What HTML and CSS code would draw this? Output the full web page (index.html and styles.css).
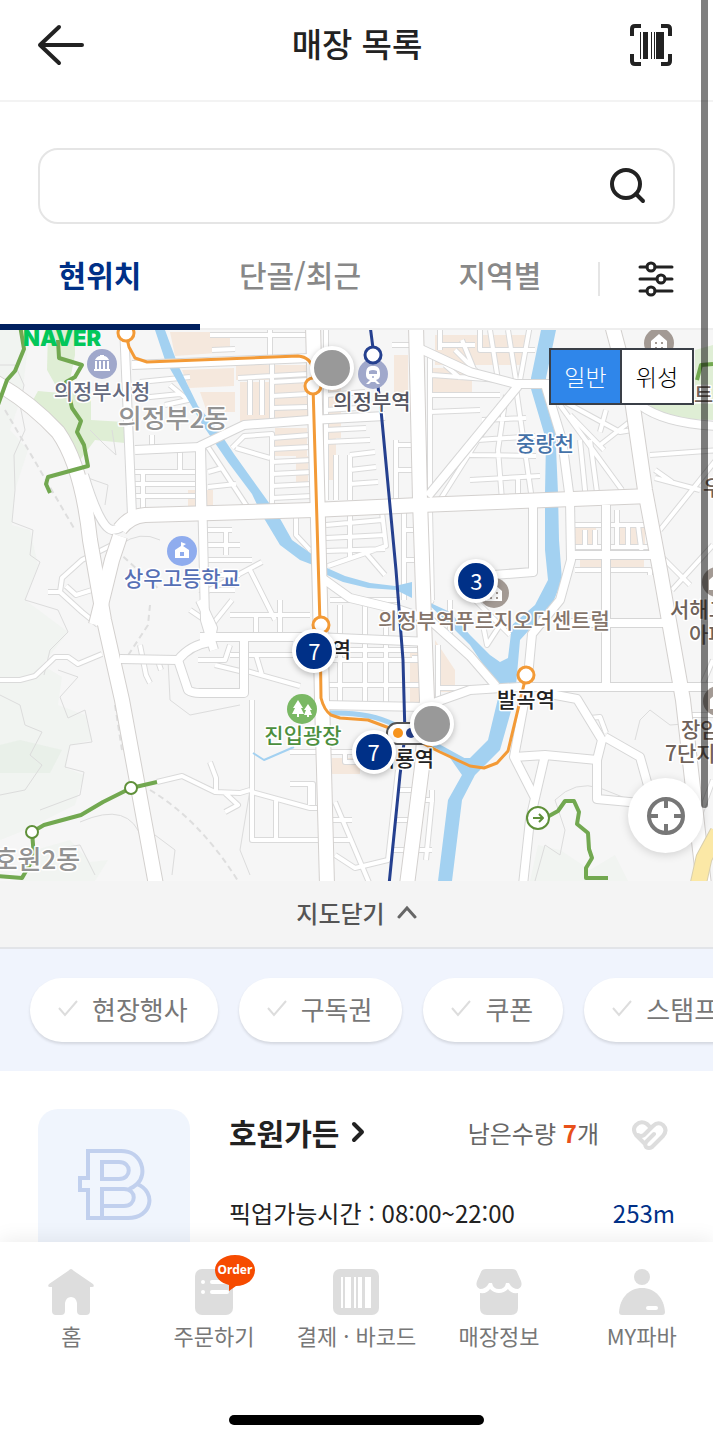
FILE: index.html
```html
<!DOCTYPE html>
<html lang="ko">
<head>
    <meta charset="UTF-8">
    <meta name="viewport" content="width=device-width, initial-scale=1.0">
    <title>매장 목록</title>
    <link rel="stylesheet" href="styles.css">
</head>
<body>
    <div class="app">
        <header class="header">
            <button class="icon-btn" aria-label="뒤로">
                <svg width="48" height="44" viewBox="0 0 48 44" class="line-icon"><path d="M22 4L3 22l19 18M3 22h42"/></svg>
            </button>
            <h1>매장 목록</h1>
            <button class="icon-btn" aria-label="바코드 스캔">
                <svg width="44" height="44" viewBox="0 0 44 44">
                    <path class="scan-frame" d="M3 13V6q0-3 3-3h6M32 3h6q3 0 3 3v7M41 31v7q0 3-3 3h-6M12 41H6q-3 0-3-3v-7"/>
                    <path fill="#222" d="M11 9h1v27h-1zM14 9h5v27h-5zM22 9h1v27h-1zM25 9h1v27h-1zM27 9h8v27h-8z"/>
                </svg>
            </button>
        </header>

        <main class="content">
            <form class="search">
                <input type="text" aria-label="매장 검색">
                <button type="button" class="icon-btn" aria-label="검색">
                    <svg width="38" height="38" viewBox="0 0 38 38" class="line-icon"><circle cx="17" cy="17" r="14"/><path d="M27 27l7 7"/></svg>
                </button>
            </form>

            <nav class="tabs">
                <button class="tab active">현위치</button>
                <button class="tab">단골/최근</button>
                <button class="tab">지역별</button>
                <button class="filter-btn" aria-label="필터">
                    <svg width="36" height="38" viewBox="0 0 36 38" class="filter-icon">
                        <path d="M2 7h7M17 7h17M2 19h17M27 19h7M2 31h7M17 31h17"/>
                        <circle cx="13" cy="7" r="4"/><circle cx="23" cy="19" r="4"/><circle cx="13" cy="31" r="4"/>
                    </svg>
                </button>
            </nav>

            <section class="map">
                <svg class="map-canvas" viewBox="0 330 713 551">
                    <defs>
                        <g id="major">
                            <path d="M-5 382Q30 402 58 432Q82 466 90 540L104 620L122 700L156 885"/>
                            <path d="M96 625L112 560L120 536"/>
                            <path d="M313 325L320 600L322 700L324 770L327 885"/>
                            <path d="M416 325L420 500L424 620L427 700L422 767L407 885"/>
                            <path d="M612 325L632 400L645 490L660 570L683 700L704 885"/>
                            <path d="M120 529Q130 516 145 515L313 510L420 505L650 496"/>
                        </g>
                        <g id="medium">
                            <path d="M84 475Q100 528 112 530Q122 530 130 518"/>
                            <path d="M124 325L132 515M132 365L310 358"/>
                            <path d="M200 510V446L244 425L310 420L385 416"/>
                            <path d="M201 446L205 620L214 650"/>
                            <path d="M135 450L200 447"/>
                            <path d="M412 345L470 372L516 384H632"/>
                            <path d="M518 386L428 496"/>
                            <path d="M533 500V572L480 576"/>
                            <path d="M545 384L562 440L570 500L571 560L560 600L532 634L527 687L514 757L535 798L530 820L523 885"/>
                            <path d="M571 555H662M606 505V687M560 623H675"/>
                            <path d="M425 706L470 690L520 687H720"/>
                            <path d="M322 705L425 707M200 637H315L430 642"/>
                            <path d="M322 578L350 598L400 610L430 620L470 656L496 686"/>
                            <path d="M550 694L577 699L602 740L597 760V799L640 803M605 737L640 757L652 800"/>
                            <path d="M514 757L545 755L597 760M545 755L535 798"/>
                            <path d="M120 659L178 660Q190 645 210 642L213 628L200 600"/>
                            <path d="M178 660L188 690Q192 693 200 693H244V640"/>
                            <path d="M720 426Q665 424 640 405"/>
                        </g>
                        <g id="minor">
                            <path d="M0 680L20 680L35 676L55 657L68 657L78 664L102 654"/>
                            <path d="M157 782L182 776L215 792L240 793L250 790M210 762L216 778V792M225 793L238 805L225 812"/>
                            <path d="M112 545L82 560L62 578L60 592L82 612L98 625M92 590L76 595L66 586M48 592H60"/>
                            <path d="M140 382L190 377M140 398L180 394M170 385L188 400L165 405M210 335H310M212 350L235 349"/>
                            <path d="M152 435V447M135 472H195M135 484H195M135 496H195M180 450V472M143 470V508M208 447L248 508M208 472L222 468M208 487L236 484"/>
                            <path d="M206 530H232M206 545H240M206 560H252M206 575H240M206 590H235M226 530V555M200 595L262 562M250 570L275 620"/>
                            <path d="M232 448L244 436L272 434V508M236 448L270 458M272 438L310 435M272 449L310 447M272 462L312 460M272 474L312 472M272 486L312 484M272 498L312 496M272 396L308 394M272 408L308 407M272 382L308 380M250 380V415M262 380V415M238 378L308 374M272 358V425M270 330V358M296 512V535L310 550"/>
                            <path d="M326 330V500M326 395L365 392M326 410L358 408M326 430L366 428M326 442L370 440M350 455L375 452M350 470L376 467M350 484L378 482M336 455V500M350 455V500M350 510V560M326 525L382 520M326 538L385 535M326 551L385 549M382 512L386 546L328 566M366 553L385 575"/>
                            <path d="M396 440V500M396 445H415M396 470H415M404 510V600M402 530H430M402 560H430M430 510L432 600M392 345H412"/>
                            <path d="M430 355V500M432 375L500 380M430 395H500M430 412L480 410M445 365L460 378M455 350L480 375M462 340L475 372M440 325V350M440 345H475M490 330L498 380M508 330L516 380M530 325L520 380M480 330V350H535"/>
                            <path d="M516 388L532 500M506 395L498 450L502 500M440 500L500 405M478 440L535 436M482 420L526 418M470 455L536 456M470 480L540 476M518 476V500"/>
                            <path d="M560 405L622 490M580 440L586 500M590 440L598 500M552 395L620 432L632 430M570 415L604 450M606 410L600 432M632 420L600 445"/>
                            <path d="M606 525V555M575 525H645M575 547H648M585 530V547M595 530V547M617 510V547M628 525V547M638 525L642 555M575 570H650V575M650 455L720 450M655 478L700 490M660 530L720 455M672 590L713 545M660 555L690 585M655 470L672 482"/>
                            <path d="M230 655H300M243 670L300 686M230 615H310M280 600V640M256 615V637M256 655L262 675"/>
                            <path d="M252 700L252 790V840H350M252 792L310 808H328M276 800V838M290 784H313V805M310 784V805M290 752H325"/>
                            <path d="M330 600H400M340 605V705M365 600V705M386 600V705M325 660H430M325 685H430M330 650H430M398 770L388 860L355 868L335 855M335 802L370 885M332 820H352M395 790H420M393 820H410M393 850H432M432 790V800L426 860M410 800H434M345 752V762H370M295 752H375"/>
                            <path d="M412 658H432M438 645V705M438 688H470M450 640V600M432 600L420 620M510 635L475 600M482 620L487 645L500 625"/>
                            <path d="M140 645L146 675L150 683M157 658L161 670M198 660L225 660L230 645M215 665L244 672M190 610L212 625L232 600"/>
                            <path d="M713 660L700 690M683 715H713M700 815L713 780M590 718L600 717L606 733"/>
                        </g>
                        <g id="poi-home"><circle r="15" fill="#a39a94"/><path d="M-8-2L0-9L8-2V8H-8z" fill="#fff"/><path d="M-4-1h2v2h-2zM2-1h2v2H2zM-4 4h2v2h-2zM2 4h2v2H2z" fill="#a39a94"/></g>
                    </defs>

                    <rect y="330" width="713" height="551" fill="#f6f6f6"/>

                    <!-- hills and parks -->
                    <path class="hill" d="M0 330H30L22 395L10 430L28 450L15 490L12 525L30 530L38 565L25 600L68 632L42 665L62 677L58 705L85 715L92 740L70 745L66 768L84 775L75 805L45 820L25 830L0 840z"/>
                    <path class="hill" d="M20 881L35 850L70 840L90 862L108 860L95 881z"/>
                    <path class="hill" d="M530 881L538 845L560 850L590 870L615 855L628 881z"/>
                    <path fill="#e6eee6" d="M0 745L20 740L62 750L50 773L0 773z" opacity=".7"/>
                    <path fill="#dfeed5" d="M48 330H75V355L68 390L91 395V420L125 422V443L95 440L80 460L33 400L38 391L60 393L47 370z"/>
                    <path fill="#dfeed5" d="M695 350L713 345V420L660 418L650 405H695z"/>

                    <!-- commercial blocks -->
                    <g class="blocks">
                        <path d="M170 332h60v20l-55 4zM182 370l52-2v18l-45 2zM200 392h35v20h-28zM236 365h70v15h-70zM240 382h68v40h-68zM275 428h32v28h-32zM296 456h12v30h-12z"/>
                        <path d="M326 378h15v60h-15zM326 435h10v45h-10zM394 355h14v45h-14zM435 335h90v30h-90zM432 368h40v30h-40zM188 490h10v20h-10zM205 490h8v20h-8z"/>
                        <path d="M570 528h26v20h-26zM615 523h30v28h-30zM580 560h64v9h-64zM410 650h18v55h-18zM435 640l20 30v22h-20zM332 758h28v16h-28z"/>
                    </g>

                    <!-- footpaths -->
                    <g class="contour">
                        <path d="M0 365L15 365L24 385L20 405L25 430L14 455L15 490L12 522L33 530L30 555L40 562L25 600L58 610L68 632L50 650L44 675M0 695L20 705L25 725L42 732L30 755L42 765L25 790L0 795M58 670L78 677L60 697L68 718L85 710L92 742L70 745L65 767L84 772L80 795L40 810M60 848L80 845L95 875M80 822Q130 800 142 840M155 835L175 850L172 875M120 545Q140 530 160 540M90 430L105 445L116 455L112 430M88 478L108 485L105 505M168 660L170 700L190 715L240 705M250 790L240 850L250 875M535 881L545 845L560 855L565 830L555 800Q575 780 600 788L630 800M635 740L640 720L650 710L670 725L710 722"/>
                    </g>
                    <g class="dashed">
                        <path d="M5 410L75 530M150 605L148 625L125 660M116 550L160 590M115 705L122 750M150 790Q200 820 238 881"/>
                    </g>

                    <use href="#minor" class="case-minor"/>
                    <use href="#minor" class="road-minor"/>

                    <!-- water, under the bridges of the larger roads -->
                    <g fill="#a3d1f1">
                        <path d="M155 330H165L178 365L198 406L218 430L234 454L272 507L278 515L292 540L313 555V565L300 560L280 545L262 515L252 494L228 462L202 424L180 386L165 360z"/>
                        <path d="M327 568L345 576L370 583L395 586L412 582V598L396 590L368 588L343 582L327 575z"/>
                        <path d="M424 600L450 612L470 635L490 655L500 662L508 658L512 625L535 605L548 580L545 550V493L546 440L531 389V378L541 330H556L546 378V389L555 425L558 493L559 540L562 580L552 605L520 640L515 697L500 750L475 775L462 800L452 881H438L448 800L462 775L450 758H470L488 740L500 690L470 645L450 625z"/>
                    </g>

                    <use href="#medium" class="case-medium"/>
                    <use href="#major" class="case-major"/>
                    <use href="#medium" class="road-medium"/>
                    <use href="#major" class="road-major"/>
                    <path d="M718 832L704 858L698 885" class="case-yellow"/>
                    <path d="M718 832L704 858L698 885" class="road-yellow"/>
                    <g class="stream">
                        <path d="M330 713Q370 712 395 725L430 742L470 764" stroke-width="5"/>
                        <path d="M253 753L264 760L294 747" stroke-width="2"/>
                    </g>

                    <!-- trails -->
                    <g class="trail">
                        <path d="M20 325L24 349L15 371L7 380L-2 405"/>
                        <path d="M58 340L59 358L82 365L75 377L66 382L72 408L81 421L77 432L84 445L88 466L48 477L46 484L50 493"/>
                        <path d="M157 782L131 788L103 802L81 815L44 825L32 832L34 857L22 878L-2 876"/>
                        <path d="M549 816L558 811L565 801H574L579 812L577 824L588 833L589 849L592 858L586 868V878H608"/>
                        <path d="M697 380L701 365L713 364"/>
                    </g>
                    <g class="trail-stop">
                        <circle cx="131" cy="788" r="6"/>
                        <circle cx="32" cy="832" r="6"/>
                        <circle cx="538" cy="818" r="11"/>
                        <path d="M533 818h9M539 814l4 4-4 4"/>
                    </g>

                    <!-- rail lines -->
                    <path class="rail orange" d="M126 335L129 347L135 358L147 362L298 356Q311 357 313 370V386L320 624L321 698Q324 710 331 715L340 718L368 720L400 732L440 752L470 766L484 768L497 763L508 751L526 676"/>
                    <path class="rail blue" d="M370 325L374 356L381 410L396 570L403 660L405 735L400 775L389 885"/>
                    <g class="stop orange">
                        <circle cx="126" cy="333" r="8"/><circle cx="313" cy="386" r="8"/><circle cx="321" cy="625" r="8"/><circle cx="526" cy="675" r="8"/>
                    </g>
                    <rect x="387" y="723" width="45" height="21" rx="10" fill="#fff" stroke="#555" stroke-width="2"/>
                    <circle cx="398" cy="733" r="5" fill="#f7941d"/>
                    <circle cx="411" cy="733" r="5" fill="#25408f"/>

                    <!-- points of interest -->
                    <g transform="translate(102 364)"><circle r="15" fill="#a0a8cb"/><path fill="#fff" d="M-7-4Q-5-8-2-8V-9H2V-8Q5-8 7-4zM-7-3h2v8h-2zM-3-3h2v8h-2zM1-3h2v8H1zM5-3h2v8H5zM-8 5H8V7H-8z"/></g>
                    <g transform="translate(373 374)"><circle r="15" fill="#a0a8cb"/><path fill="#fff" fill-rule="evenodd" d="M-2-8H2Q7-7 7-1V1Q7 5 3 6L7 10H4L2 8H-2L-4 10H-7L-3 6Q-7 5-7 1V-1Q-7-7-2-8zM-4-3Q0-5 4-3V0H-4z"/><circle cy="3" r="1" fill="#a0a8cb"/></g>
                    <circle class="stop blue" cx="373" cy="355" r="8"/>
                    <g transform="translate(182 551)"><circle r="15" fill="#8facee"/><path fill="#fff" fill-rule="evenodd" d="M-7-1L-1-5V-9L4-7L1-5L7-1V7H-7zM-2 1V5H2V1z"/></g>
                    <g transform="translate(302 709)"><circle r="15" fill="#7ab864"/><path fill="#fff" d="M-4-9L1-1H-1L2 5H-3V8H-5V5H-10L-7-1H-9zM6-5L10 1H8L10 6H7V8H5V6H2L4 1H2z"/></g>
                    <use href="#poi-home" x="659" y="343"/>
                    <use href="#poi-home" x="494" y="593"/>
                    <use href="#poi-home" x="717" y="582"/>
                    <use href="#poi-home" x="718" y="701"/>

                    <text x="23" y="346" class="naver">NAVER</text>
                    <g class="place">
                        <text x="102" y="399" fill="#666b80">의정부시청</text>
                        <text x="372" y="409" fill="#555560">의정부역</text>
                        <text x="182" y="586" fill="#5670b5">상우고등학교</text>
                        <text x="303" y="743" fill="#4c8f3e">진입광장</text>
                        <text x="494" y="628" fill="#85756b">의정부역푸르지오더센트럴</text>
                        <text x="545" y="451" fill="#4572a8">중랑천</text>
                        <text x="322" y="657" fill="#222">범골역</text>
                        <text x="526" y="707" fill="#222">발곡역</text>
                        <text x="405" y="766" fill="#222">회룡역</text>
                        <g class="place-start">
                            <text x="670" y="617">서해그랑블</text>
                            <text x="689" y="642">아파트</text>
                            <text x="681" y="737">장암주공</text>
                            <text x="665" y="761">7단지</text>
                            <text x="694" y="402">트</text>
                            <text x="703" y="495">우성</text>
                        </g>
                    </g>
                    <g class="district">
                        <text x="173" y="428">의정부2동</text>
                        <text x="37" y="869">호원2동</text>
                    </g>
                </svg>

                <button class="pin closed" style="left: 46.5%; top: 6.9%" aria-label="영업 종료 매장"></button>
                <button class="pin closed" style="left: 60.6%; top: 71.5%" aria-label="영업 종료 매장"></button>
                <button class="pin" style="left: 66.8%; top: 45.6%">3</button>
                <button class="pin" style="left: 44.1%; top: 58.3%">7</button>
                <button class="pin" style="left: 52.4%; top: 76.6%">7</button>

                <div class="map-type">
                    <button class="selected">일반</button>
                    <button>위성</button>
                </div>
                <button class="locate" aria-label="내 위치">
                    <svg width="40" height="40" viewBox="0 0 40 40"><circle cx="20" cy="20" r="17"/><path d="M20 3v9M20 28v9M3 20h9M28 20h9"/></svg>
                </button>
            </section>

            <button class="map-close">
                지도닫기
                <svg width="20" height="14" viewBox="0 0 20 14"><path d="M2 12l8-9 8 9"/></svg>
            </button>

            <div class="chips">
                <button class="chip"><svg width="20" height="18" viewBox="0 0 20 18"><path d="M1 9l6 7L19 2"/></svg>현장행사</button>
                <button class="chip"><svg width="20" height="18" viewBox="0 0 20 18"><path d="M1 9l6 7L19 2"/></svg>구독권</button>
                <button class="chip"><svg width="20" height="18" viewBox="0 0 20 18"><path d="M1 9l6 7L19 2"/></svg>쿠폰</button>
                <button class="chip"><svg width="20" height="18" viewBox="0 0 20 18"><path d="M1 9l6 7L19 2"/></svg>스탬프</button>
            </div>

            <article class="store">
                <div class="store-thumb">
                    <svg width="76" height="72" viewBox="0 0 76 72">
                        <path d="M12 2H45C66 2 72 25 61 35C81 43 76 69 52 69H12V41H4V29H12zM26 13H43C56 13 56 30 43 30H26zM26 69V40H48C61 40 61 57 48 57H26M53 40Q58 38 61 35"/>
                    </svg>
                </div>
                <div class="store-info">
                    <div class="store-row">
                        <h2><a href="#">호원가든 <svg width="14" height="22" viewBox="0 0 14 22"><path d="M3 3l8 8-8 8"/></svg></a></h2>
                        <span class="stock">남은수량 <strong>7</strong>개</span>
                        <button class="icon-btn" aria-label="단골 매장 등록">
                            <svg width="36" height="34" viewBox="0 0 36 34" class="heart"><path d="M12 17L21 8Q26 3 31 7Q36 12 31 18L20 29Q17 31 14 29Q12 26 15 23L22 16M12 25L4 17Q0 11 4 7Q9 2 15 6L17 8M12 17Q9 19 6 17"/></svg>
                        </button>
                    </div>
                    <div class="store-row">
                        <span>픽업가능시간 : 08:00~22:00</span>
                        <span class="distance">253m</span>
                    </div>
                </div>
            </article>
        </main>

        <footer class="footer">
            <nav class="bottom-nav">
                <a href="#">
                    <svg width="46" height="46" viewBox="0 0 46 46"><path d="M23 0Q24 0 26 2L45 15Q47 18 44 18H42V42Q42 46 38 46H33Q29 46 29 42V34Q28 28 23 28T17 34V42Q17 46 13 46H8Q4 46 4 42V18H2Q-1 18 1 15L20 2Q22 0 23 0z"/></svg>
                    홈
                </a>
                <a href="#">
                    <svg width="46" height="46" viewBox="0 0 46 46"><rect x="4" width="38" height="46" rx="7"/><path class="cut" d="M12 13h0M12 23h0M21 13h16M21 23h15"/></svg>
                    <span class="order-badge"><svg width="42" height="38" viewBox="0 0 42 38"><path d="M21 1C9 1 1 8 1 16C1 24 7 29 15 31V37L22 32C33 32 41 25 41 16C41 8 33 1 21 1z"/></svg><b>Order</b></span>
                    주문하기
                </a>
                <a href="#">
                    <svg width="46" height="46" viewBox="0 0 46 46"><rect width="46" height="46" rx="7"/><path fill="#fff" d="M8 8h2v31H8zM12 8h6v31h-6zM21 8h2v31h-2zM25 8h4v31h-4zM32 8h6v31h-6z"/></svg>
                    결제 · 바코드
                </a>
                <a href="#">
                    <svg width="46" height="46" viewBox="0 0 46 46"><path d="M10 0H36Q40 0 41 3L45 12Q47 18 42 20Q36 20 33 14H30Q29 20 23 20T16 14H13Q10 20 4 20Q-1 18 1 12L5 3Q6 0 10 0zM4 24Q11 25 14 20Q18 24 23 24T32 20Q35 25 42 24V39Q42 46 35 46H11Q4 46 4 39z"/></svg>
                    매장정보
                </a>
                <a href="#">
                    <svg width="46" height="46" viewBox="0 0 46 46"><circle cx="23" cy="8" r="8"/><path d="M0 43C1 29 10 19 23 19S45 29 46 43Q46 46 43 46H3Q0 46 0 43z"/><rect x="27" y="37" width="12" height="4" rx="2" fill="#fff"/></svg>
                    MY파바
                </a>
            </nav>
            <div class="home-bar"></div>
        </footer>
        <div class="scroll-thumb"></div>
    </div>
</body>
</html>
```
FILE: styles.css
```css
:root {
    --navy: #003087;
    --text-color: #222;
    --muted: #777;
    --border-color: #e5e5e5;
    --icon-gray: #ddd;
}
* {
    box-sizing: border-box;
}
body {
    margin: 0;
    font-family: 'Noto Sans CJK KR', sans-serif;
    color: var(--text-color);
    background-color: #fff;
}
button {
    padding: 0;
    border: none;
    background: none;
    font-family: inherit;
    color: inherit;
    cursor: pointer;
}
a {
    color: inherit;
    text-decoration: none;
}
svg {
    display: block;
    flex-shrink: 0;
}
h1, h2 {
    margin: 0;
}
.app {
    position: relative;
    display: flex;
    flex-direction: column;
    height: 100vh;
    overflow: hidden;
}
.header {
    display: flex;
    align-items: center;
    justify-content: space-between;
    padding: 0 40px 10px 37px;
    height: 102px;
    flex-shrink: 0;
    border-bottom: 2px solid #f3f3f3;
}
.header h1 {
    padding-bottom: 4px;
    font-size: 33px;
    font-weight: 500;
    line-height: 48px;
}
.line-icon {
    fill: none;
    stroke: #222;
    stroke-width: 4;
    stroke-linecap: round;
    stroke-linejoin: round;
}
.scan-frame {
    fill: none;
    stroke: #222;
    stroke-width: 4;
}
.content {
    flex: 1;
    min-height: 0;
    overflow: hidden;
}
.search {
    display: flex;
    align-items: center;
    height: 76px;
    margin: 46px 38px 0;
    padding: 0 26px 0 24px;
    border: 2px solid var(--border-color);
    border-radius: 20px;
}
.search input {
    flex: 1;
    min-width: 0;
    border: none;
    outline: none;
    font-family: inherit;
    font-size: 26px;
    background: none;
}
.tabs {
    display: grid;
    grid-template-columns: 200fr 200fr 200fr 113fr;
    height: 106px;
    border-bottom: 2px solid #eee;
}
.tab {
    font-size: 30px;
    font-weight: 500;
    color: #888;
    border-bottom: 6px solid transparent;
    margin-bottom: -2px;
}
.tab.active {
    font-weight: 700;
    color: var(--navy);
    border-color: #00205f;
}
.filter-btn {
    display: flex;
    align-items: center;
    justify-content: center;
    height: 34px;
    margin: 38px 2px 0 -2px;
    border-left: 2px solid var(--border-color);
}
.filter-icon {
    fill: none;
    stroke: #222;
    stroke-width: 3;
    stroke-linecap: round;
}

/* map */
.map {
    position: relative;
    overflow: hidden;
}
.map-canvas {
    width: 100%;
    height: auto;
}
.hill {
    fill: #f1f4f1;
}
.blocks {
    fill: #f5e8dd;
}
.contour, .dashed, .trail, .trail-stop path, .stream, .rail,
.case-minor, .case-medium, .case-major, .case-yellow,
.road-minor, .road-medium, .road-major, .road-yellow {
    fill: none;
    stroke-linejoin: round;
}
.contour {
    stroke: #dcdcdc;
    stroke-width: 1;
}
.dashed {
    stroke: #dedede;
    stroke-width: 2;
    stroke-dasharray: 6 4;
}
.case-minor { stroke: #dadada; stroke-width: 6; }
.case-medium { stroke: #d6d6d6; stroke-width: 10; }
.case-major { stroke: #d3d0ce; stroke-width: 16; }
.case-yellow { stroke: #d8cfae; stroke-width: 17; }
.road-minor { stroke: #fff; stroke-width: 4; }
.road-medium { stroke: #fff; stroke-width: 8; }
.road-major { stroke: #fff; stroke-width: 14; }
.road-yellow { stroke: #fbe8a6; stroke-width: 15; }
.stream {
    stroke: #a3d1f1;
}
.trail {
    stroke: #72a850;
    stroke-width: 4;
}
.trail-stop {
    fill: #fff;
    stroke: #5f9039;
    stroke-width: 2;
}
.rail,
.stop {
    stroke-width: 3;
}
.stop {
    fill: #fff;
}
.orange {
    stroke: #f39a36;
}
.blue {
    stroke: #25408f;
}
.naver {
    font-family: Inter, sans-serif;
    font-size: 22px;
    font-weight: 900;
    fill: #03c75a;
}
.place, .district {
    text-anchor: middle;
    font-weight: 500;
    stroke: #fff;
    stroke-width: 3;
    stroke-linejoin: round;
    paint-order: stroke;
}
.place {
    font-size: 21px;
}
.place-start {
    text-anchor: start;
    fill: #6f625a;
}
.district {
    font-size: 26px;
    fill: #929292;
}
.pin {
    position: absolute;
    width: 44px;
    height: 44px;
    margin: -22px 0 0 -22px;
    padding-bottom: 2px;
    border: 4px solid #fff;
    border-radius: 50%;
    background-color: var(--navy);
    color: #fff;
    font-size: 22px;
    line-height: 34px;
    box-shadow: 0 2px 6px rgba(0,0,0,0.25);
}
.pin.closed {
    background-color: #999;
}
.map-type {
    position: absolute;
    top: 18px;
    right: 19px;
    display: flex;
    border: 2px solid #3a3f47;
    background-color: #fff;
}
.map-type button {
    width: 70px;
    height: 53px;
    padding-bottom: 2px;
    font-size: 23px;
    font-weight: 300;
    color: #000;
}
.map-type button.selected {
    width: 71px;
    background-color: #2f86ea;
    color: #fff;
    border-right: 2px solid #3a3f47;
}
.locate {
    position: absolute;
    right: 10px;
    bottom: 28px;
    display: flex;
    align-items: center;
    justify-content: center;
    width: 75px;
    height: 75px;
    border-radius: 50%;
    background-color: #fff;
    box-shadow: 0 2px 10px rgba(0,0,0,0.15);
}
.locate svg {
    fill: none;
    stroke: #777;
    stroke-width: 4;
}
.map-close {
    display: flex;
    align-items: center;
    justify-content: center;
    gap: 12px;
    width: 100%;
    height: 68px;
    padding-bottom: 4px;
    background-color: #f4f4f4;
    border-bottom: 2px solid #e2e4e8;
    font-size: 24px;
    font-weight: 500;
    color: #555;
}
.map-close svg {
    fill: none;
    stroke: #666;
    stroke-width: 3;
    stroke-linecap: round;
}

/* filters */
.chips {
    display: flex;
    gap: 21px;
    padding: 29px 30px;
    overflow: hidden;
    background-color: #f0f4fd;
}
.chip {
    display: flex;
    align-items: center;
    flex-shrink: 0;
    gap: 14px;
    height: 64px;
    padding: 0 30px 4px 28px;
    border-radius: 32px;
    background-color: #fff;
    font-size: 26px;
    color: var(--muted);
    box-shadow: 0 2px 3px rgba(0,0,0,0.12);
}
.chip svg {
    fill: none;
    stroke: #ddd;
    stroke-width: 2;
}

/* store */
.store {
    display: flex;
    gap: 39px;
    padding: 36px 38px 40px;
}
.store-thumb {
    display: flex;
    align-items: center;
    justify-content: center;
    flex-shrink: 0;
    width: 152px;
    height: 152px;
    margin-top: 2px;
    border-radius: 20px;
    background-color: #f0f5fd;
}
.store-thumb svg {
    fill: none;
    stroke: #c1d0ee;
    stroke-width: 4;
}
.store-info {
    flex: 1;
    display: flex;
    flex-direction: column;
    gap: 32px;
    font-size: 24px;
}
.store-row {
    display: flex;
    align-items: center;
    line-height: 48px;
}
.store h2 {
    flex: 1;
    font-size: 30px;
    font-weight: 700;
}
.store h2 a {
    display: flex;
    align-items: center;
    gap: 12px;
}
.store h2 svg {
    fill: none;
    stroke: #222;
    stroke-width: 4;
    stroke-linecap: round;
    stroke-linejoin: round;
}
.stock {
    margin: 2px 33px 0 0;
    color: #666;
}
.stock strong {
    color: #e8501a;
}
.heart {
    margin: 6px 7px 0 0;
    fill: none;
    stroke: #ddd;
    stroke-width: 4;
    stroke-linecap: round;
    stroke-linejoin: round;
}
.distance {
    margin-left: auto;
    color: var(--navy);
}

/* bottom navigation */
.footer {
    position: relative;
    flex-shrink: 0;
    padding: 27px 0 15px;
    background-color: #fff;
    box-shadow: 0 -2px 20px rgba(0,0,0,0.08);
}
.bottom-nav {
    display: grid;
    grid-template-columns: repeat(5, 1fr);
    height: 146px;
}
.bottom-nav a {
    position: relative;
    display: flex;
    flex-direction: column;
    align-items: center;
    gap: 4px;
    font-size: 22px;
    line-height: 32px;
    color: var(--muted);
}
.bottom-nav svg {
    fill: var(--icon-gray);
}
.bottom-nav .cut {
    fill: none;
    stroke: #fff;
    stroke-width: 4;
    stroke-linecap: round;
}
.order-badge {
    position: absolute;
    top: -15px;
    left: 50%;
    width: 42px;
}
.order-badge svg {
    fill: #f64b00;
}
.order-badge b {
    position: absolute;
    inset: 0;
    text-align: center;
    font-family: 'Noto Sans', sans-serif;
    font-size: 12px;
    color: #fff;
}
.home-bar {
    width: 255px;
    height: 10px;
    margin: 0 auto;
    border-radius: 5px;
    background-color: #000;
}
.scroll-thumb {
    position: absolute;
    top: 0;
    right: 5px;
    width: 7px;
    height: 808px;
    border-radius: 0 0 4px 4px;
    background-color: rgba(0,0,0,0.5);
}
```
